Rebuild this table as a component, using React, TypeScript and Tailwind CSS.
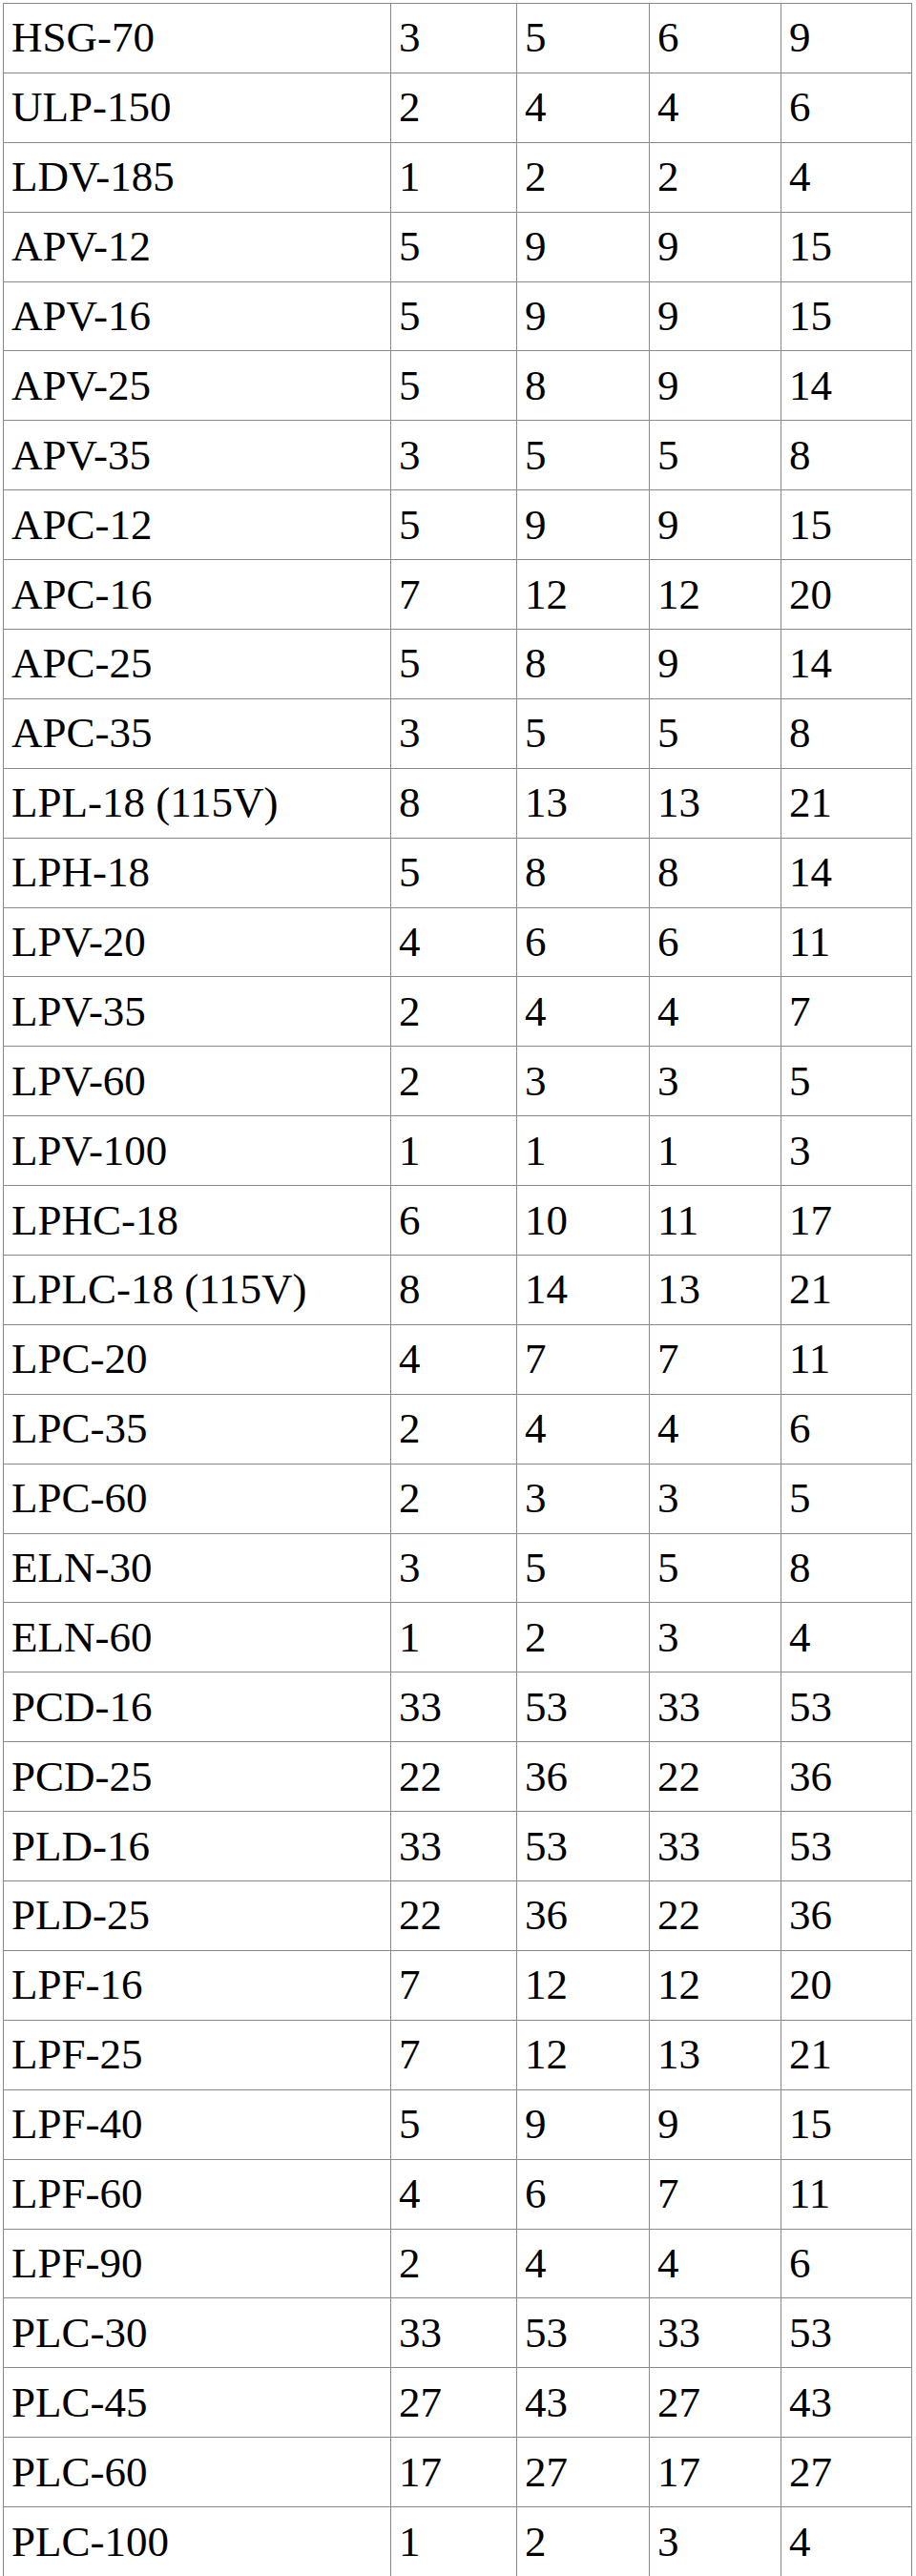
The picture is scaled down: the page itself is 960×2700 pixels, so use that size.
import React from "react";

const rows: [string, string, string, string, string][] = [
  ["HSG-70", "3", "5", "6", "9"],
  ["ULP-150", "2", "4", "4", "6"],
  ["LDV-185", "1", "2", "2", "4"],
  ["APV-12", "5", "9", "9", "15"],
  ["APV-16", "5", "9", "9", "15"],
  ["APV-25", "5", "8", "9", "14"],
  ["APV-35", "3", "5", "5", "8"],
  ["APC-12", "5", "9", "9", "15"],
  ["APC-16", "7", "12", "12", "20"],
  ["APC-25", "5", "8", "9", "14"],
  ["APC-35", "3", "5", "5", "8"],
  ["LPL-18 (115V)", "8", "13", "13", "21"],
  ["LPH-18", "5", "8", "8", "14"],
  ["LPV-20", "4", "6", "6", "11"],
  ["LPV-35", "2", "4", "4", "7"],
  ["LPV-60", "2", "3", "3", "5"],
  ["LPV-100", "1", "1", "1", "3"],
  ["LPHC-18", "6", "10", "11", "17"],
  ["LPLC-18 (115V)", "8", "14", "13", "21"],
  ["LPC-20", "4", "7", "7", "11"],
  ["LPC-35", "2", "4", "4", "6"],
  ["LPC-60", "2", "3", "3", "5"],
  ["ELN-30", "3", "5", "5", "8"],
  ["ELN-60", "1", "2", "3", "4"],
  ["PCD-16", "33", "53", "33", "53"],
  ["PCD-25", "22", "36", "22", "36"],
  ["PLD-16", "33", "53", "33", "53"],
  ["PLD-25", "22", "36", "22", "36"],
  ["LPF-16", "7", "12", "12", "20"],
  ["LPF-25", "7", "12", "13", "21"],
  ["LPF-40", "5", "9", "9", "15"],
  ["LPF-60", "4", "6", "7", "11"],
  ["LPF-90", "2", "4", "4", "6"],
  ["PLC-30", "33", "53", "33", "53"],
  ["PLC-45", "27", "43", "27", "43"],
  ["PLC-60", "17", "27", "17", "27"],
  ["PLC-100", "1", "2", "3", "4"],
];

export default function App() {
  return (
    <div className="bg-white w-[960px] pt-[3px] pl-[3px]" style={{ fontFamily: '"Liberation Serif", "Times New Roman", serif' }}>
      <table className="table-fixed border-collapse border border-[#a8a8a8] w-[952px] text-[45px] leading-none text-black">
        <colgroup>
          <col className="w-[406px]" />
          <col className="w-[132px]" />
          <col className="w-[139px]" />
          <col className="w-[138px]" />
          <col className="w-[137px]" />
        </colgroup>
        <tbody>
          {rows.map((r) => (
            <tr key={r[0]} className="h-[72.9px]">
              {r.map((c, i) => (
                <td key={i} className="border border-[#8a8a8a] px-[8px] align-middle whitespace-nowrap">
                  {c}
                </td>
              ))}
            </tr>
          ))}
        </tbody>
      </table>
    </div>
  );
}
